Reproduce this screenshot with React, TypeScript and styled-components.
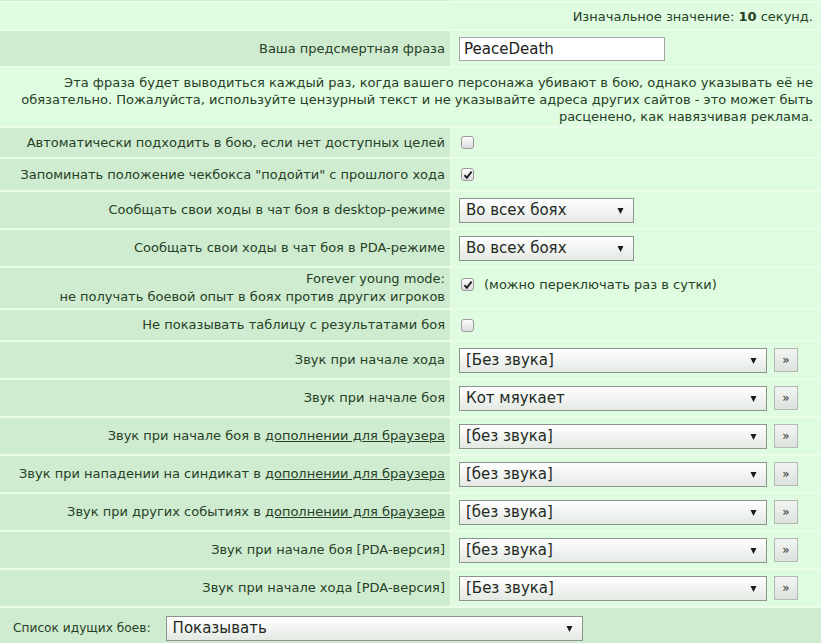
import React from "react";
import styled, { createGlobalStyle } from "styled-components";

const GlobalStyle = createGlobalStyle`
  html, body {
    margin: 0;
    padding: 0;
    background: #e9fde9;
  }
  body {
    font-family: Verdana, "DejaVu Sans", sans-serif;
    font-size: 13px;
    color: #274027;
    overflow: hidden;
  }
`;

export default function App() {
  return (
    <>
      <GlobalStyle />
      <Table>
        <Row h={1}>
          <Label />
          <Value />
        </Row>
        <Row h={26}>
          <WideCell>
            Изначальное значение: <b>10</b> секунд.
          </WideCell>
        </Row>
        <Row h={35}>
          <Label>
            <span>Ваша предсмертная фраза</span>
          </Label>
          <Value>
            <TextInput defaultValue="PeaceDeath" />
          </Value>
        </Row>
        <Row h={58}>
          <Note>
            Эта фраза будет выводиться каждый раз, когда вашего персонажа
            убивают в бою, однако указывать её не
            <br />
            обязательно. Пожалуйста, используйте цензурный текст и не
            указывайте адреса других сайтов - это может быть
            <br />
            расценено, как навязчивая реклама.
          </Note>
        </Row>
        <Row h={29}>
          <Label>
            <span>Автоматически подходить в бою, если нет доступных целей</span>
          </Label>
          <Value>
            <Check />
          </Value>
        </Row>
        <Row h={31}>
          <Label>
            <span>Запоминать положение чекбокса "подойти" с прошлого хода</span>
          </Label>
          <Value>
            <Check checked />
          </Value>
        </Row>
        <Row h={36}>
          <Label>
            <span>Сообщать свои ходы в чат боя в desktop-режиме</span>
          </Label>
          <Value>
            <Select w={175} text="Во всех боях" />
          </Value>
        </Row>
        <Row h={36}>
          <Label>
            <span>Сообщать свои ходы в чат боя в PDA-режиме</span>
          </Label>
          <Value>
            <Select w={175} text="Во всех боях" />
          </Value>
        </Row>
        <Row h={40}>
          <Label>
            <span>
              Forever young mode:
              <br />
              не получать боевой опыт в боях против других игроков
            </span>
          </Label>
          <Value top>
            <Check checked />
            <Hint>(можно переключать раз в сутки)</Hint>
          </Value>
        </Row>
        <Row h={30}>
          <Label>
            <span>Не показывать таблицу с результатами боя</span>
          </Label>
          <Value>
            <Check />
          </Value>
        </Row>
        <SoundRow label="Звук при начале хода" value="[Без звука]" />
        <SoundRow label="Звук при начале боя" value="Кот мяукает" />
        <SoundRow label="Звук при начале боя в" link value="[без звука]" />
        <SoundRow
          label="Звук при нападении на синдикат в"
          link
          value="[без звука]"
        />
        <SoundRow label="Звук при других событиях в" link value="[без звука]" />
        <SoundRow label="Звук при начале боя [PDA-версия]" value="[без звука]" />
        <SoundRow label="Звук при начале хода [PDA-версия]" value="[Без звука]" />
        <FooterRow>
          <FooterLabel>Список идущих боев:</FooterLabel>
          <Select w={417} text="Показывать" />
        </FooterRow>
      </Table>
    </>
  );
}

function SoundRow({
  label,
  value,
  link
}: {
  label: string;
  value: string;
  link?: boolean;
}) {
  return (
    <Row h={36}>
      <Label>
        <span>
          {label}
          {link && (
            <>
              {" "}
              <Link href="#">дополнении для браузера</Link>
            </>
          )}
        </span>
      </Label>
      <Value>
        <Select w={308} text={value} />
        <PlayButton type="button">»</PlayButton>
      </Value>
    </Row>
  );
}

function Select({ w, text }: { w: number; text: string }) {
  return (
    <SelectBox style={{ width: w }}>
      <span>{text}</span>
      <Arrow viewBox="0 0 7 7">
        <path d="M0.5 1 L6.5 1 L3.5 7 Z" fill="#1a1a1a" />
      </Arrow>
    </SelectBox>
  );
}

function Check({ checked }: { checked?: boolean }) {
  return (
    <CheckBox>
      {checked && (
        <svg width="10" height="10" viewBox="0 0 10 10">
          <path
            d="M1.5 5.2 L3.8 7.8 L8.6 1.6"
            stroke="#1e1e1e"
            strokeWidth="1.9"
            fill="none"
          />
        </svg>
      )}
    </CheckBox>
  );
}

const Table = styled.div`
  display: flex;
  flex-direction: column;
  gap: 2px;
  width: 821px;
`;

const Row = styled.div<{ h: number }>`
  display: grid;
  grid-template-columns: 450px 1fr;
  column-gap: 1px;
  height: ${(p) => p.h}px;
`;

const Label = styled.div`
  background: #d0ecd0;
  display: flex;
  align-items: center;
  justify-content: flex-end;
  text-align: right;
  padding: 0 5px;
  line-height: 18px;
  white-space: nowrap;
`;

const Value = styled.div<{ top?: boolean }>`
  background: #e0fce0;
  display: flex;
  align-items: ${(p) => (p.top ? "flex-start" : "center")};
  padding: ${(p) => (p.top ? "10px 7px 0 8px" : "0 7px 0 8px")};
  gap: 7px;
`;

const WideCell = styled.div`
  grid-column: 1 / -1;
  background: #e0fce0;
  text-align: right;
  padding: 6px 8px 0;
`;

const Note = styled(WideCell)`
  line-height: 17px;
  padding-top: 6px;
`;

const TextInput = styled.input`
  box-sizing: border-box;
  width: 206px;
  height: 24px;
  border: 1px solid #a5a5a5;
  background: #fff;
  font-family: Verdana, "DejaVu Sans", sans-serif;
  font-size: 15px;
  color: #222;
  padding: 0 4px;
  outline: none;
`;

const CheckBox = styled.span`
  box-sizing: border-box;
  width: 13px;
  height: 13px;
  margin-left: 2px;
  border: 1px solid #9a9a9a;
  border-radius: 3px;
  background: linear-gradient(#fdfdfd, #dcdcdc);
  display: inline-flex;
  align-items: center;
  justify-content: center;
  flex-shrink: 0;
`;

const Hint = styled.span`
  margin-left: 3px;
  line-height: 13px;
`;

const SelectBox = styled.div`
  box-sizing: border-box;
  height: 25px;
  border: 1px solid #8c958c;
  background: linear-gradient(#ffffff, #e4e9e4);
  display: flex;
  align-items: center;
  justify-content: space-between;
  padding: 0 9px 0 6px;
  font-size: 15px;
  color: #1f2a1f;
  flex-shrink: 0;
`;

const Arrow = styled.svg`
  width: 7px;
  height: 7px;
`;

const PlayButton = styled.button`
  box-sizing: border-box;
  width: 24px;
  height: 24px;
  padding: 0;
  border: 1px solid #b3b8b3;
  background: linear-gradient(#f2f4f2, #dde2dd);
  font-family: Verdana, "DejaVu Sans", sans-serif;
  font-size: 12px;
  color: #333;
`;

const Link = styled.a`
  color: inherit;
  text-decoration: underline;
`;

const FooterRow = styled.div`
  background: #d0ecd0;
  height: 40px;
  display: flex;
  align-items: center;
  gap: 15px;
  padding: 0 0 6px 13px;
`;

const FooterLabel = styled.span`
  font-size: 12.2px;
`;
